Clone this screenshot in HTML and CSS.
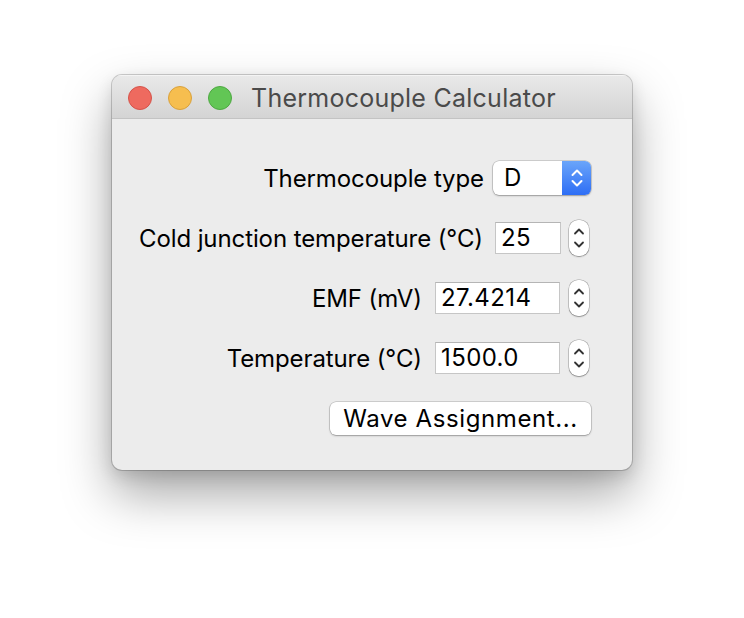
FILE: index.html
```html
<!DOCTYPE html>
<html>
<head>
<meta charset="utf-8">
<link rel="stylesheet" href="styles.css">
</head>
<body>
<div class="window">
  <div class="titlebar">
    <div class="lights">
      <span class="light red"></span>
      <span class="light yellow"></span>
      <span class="light green"></span>
    </div>
    <div class="title">Thermocouple Calculator</div>
  </div>
  <div class="content">
    <div class="row row-popup">
      <span class="label">Thermocouple type</span>
      <div class="popup">
        <span class="popup-value">D</span>
        <span class="popup-arrows">
          <svg width="14" height="20" viewBox="0 0 14 20"><path d="M2.5 7 L7 2.5 L11.5 7 M2.5 13 L7 17.5 L11.5 13" fill="none" stroke="#fff" stroke-width="2" stroke-linecap="round" stroke-linejoin="round"/></svg>
        </span>
      </div>
    </div>
    <div class="row">
      <span class="label">Cold junction temperature (°C)</span>
      <div class="field short">25</div>
      <div class="stepper">
        <svg width="12" height="26" viewBox="0 0 12 26"><path d="M2 8.5 L6 4.5 L10 8.5 M2 17.5 L6 21.5 L10 17.5" fill="none" stroke="#333" stroke-width="1.8" stroke-linecap="round" stroke-linejoin="round"/></svg>
      </div>
    </div>
    <div class="row">
      <span class="label">EMF (mV)</span>
      <div class="field long">27.4214</div>
      <div class="stepper">
        <svg width="12" height="26" viewBox="0 0 12 26"><path d="M2 8.5 L6 4.5 L10 8.5 M2 17.5 L6 21.5 L10 17.5" fill="none" stroke="#333" stroke-width="1.8" stroke-linecap="round" stroke-linejoin="round"/></svg>
      </div>
    </div>
    <div class="row">
      <span class="label">Temperature (°C)</span>
      <div class="field long">1500.0</div>
      <div class="stepper">
        <svg width="12" height="26" viewBox="0 0 12 26"><path d="M2 8.5 L6 4.5 L10 8.5 M2 17.5 L6 21.5 L10 17.5" fill="none" stroke="#333" stroke-width="1.8" stroke-linecap="round" stroke-linejoin="round"/></svg>
      </div>
    </div>
    <div class="row row-button">
      <button class="button">Wave Assignment...</button>
    </div>
  </div>
</div>
</body>
</html>
```
FILE: styles.css
```css
html, body {
  margin: 0;
  padding: 0;
  background: #ffffff;
}
body {
  width: 744px;
  height: 618px;
  overflow: hidden;
  font-family: "Inter", "Liberation Sans", Arial, sans-serif;
  padding-top: 75px;
  box-sizing: border-box;
}
.window {
  margin-left: 112px;
  width: 520px;
  height: 395px;
  border-radius: 10px;
  background: #ececec;
  box-shadow: 0 0 0 1px rgba(0,0,0,0.18), 0 24px 50px rgba(0,0,0,0.35), 0 6px 16px rgba(0,0,0,0.12);
  overflow: hidden;
  display: flex;
  flex-direction: column;
}
.titlebar {
  height: 44px;
  flex: none;
  box-sizing: border-box;
  padding-top: 3px;
  background: linear-gradient(#e9e9e9, #d4d4d4);
  border-bottom: 1px solid #c3c3c3;
  display: flex;
  align-items: center;
  box-shadow: inset 0 1px 0 #f4f4f4;
}
.lights {
  display: flex;
  gap: 16px;
  margin-left: 16px;
}
.light {
  width: 24px;
  height: 24px;
  border-radius: 50%;
  box-sizing: border-box;
}
.red { background: #ee6a5f; border: 1px solid #d5534a; }
.yellow { background: #f6be4f; border: 1px solid #d9a13c; }
.green { background: #62c655; border: 1px solid #4ea842; }
.title {
  margin-left: 19px;
  font-size: 25px;
  color: #4a4a4a;
  letter-spacing: 0.25px;
}
.content {
  flex: 1;
  padding: 41px 41px 0 0;
  display: flex;
  flex-direction: column;
  gap: 24px;
}
.row {
  height: 36px;
  display: flex;
  align-items: center;
  justify-content: flex-end;
}
.label {
  font-size: 24px;
  color: #000;
  letter-spacing: -0.1px;
}
.row-popup .label { margin-right: 9px; }
.popup {
  width: 98px;
  height: 34px;
  border-radius: 6px;
  background: #fff;
  box-shadow: 0 0 0 0.5px rgba(0,0,0,0.25), 0 1px 2px rgba(0,0,0,0.25);
  display: flex;
  overflow: hidden;
}
.popup-value {
  flex: 1;
  font-size: 24px;
  color: #000;
  padding-left: 11px;
  line-height: 34px;
}
.popup-arrows {
  width: 29px;
  background: linear-gradient(#6aa5fa, #2e6ef5);
  display: flex;
  align-items: center;
  justify-content: center;
}
.field {
  height: 32px;
  box-sizing: border-box;
  background: #fff;
  border: 1px solid #c6c6c6;
  border-top-color: #b5b5b5;
  font-size: 24px;
  letter-spacing: 0.4px;
  color: #000;
  line-height: 30px;
  padding-left: 5px;
  margin-left: 12px;
  margin-right: 8px;
}
.field.short { width: 66px; }
.field.long { width: 125px; margin-left: 13px; margin-right: 9px; }
.stepper {
  width: 20px;
  height: 36px;
  box-sizing: border-box;
  border-radius: 9px;
  background: #fff;
  box-shadow: 0 0 0 0.5px rgba(0,0,0,0.3), 0 1px 1.5px rgba(0,0,0,0.25);
  display: flex;
  align-items: center;
  justify-content: center;
  margin-right: 2px;
}
.button {
  width: 261px;
  height: 33px;
  border: none;
  border-radius: 6px;
  background: #fff;
  box-shadow: 0 0 0 0.5px rgba(0,0,0,0.25), 0 1px 2px rgba(0,0,0,0.25);
  font-family: inherit;
  font-size: 24px;
  letter-spacing: 0.6px;
  color: #000;
  padding: 0;
}
```
